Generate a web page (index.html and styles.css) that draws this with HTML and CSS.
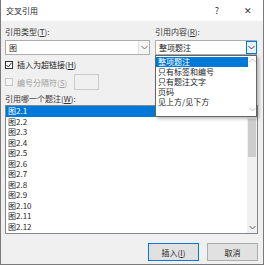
FILE: index.html
```html
<!DOCTYPE html>
<html lang="zh-CN">
<head>
    <meta charset="UTF-8">
    <title>交叉引用</title>
    <link rel="stylesheet" href="styles.css">
</head>
<body>
    <div class="dialog">
        <div class="titlebar">
            <span class="title">交叉引用</span>
            <span class="help">?</span>
            <span class="close">&#x2715;</span>
        </div>
        <div class="content">
            <div class="top">
                <div class="col left">
                    <div class="label">引用类型(<u>T</u>):</div>
                    <div class="select">
                        <span class="value">图</span>
                        <span class="arrow"><svg width="7" height="5" viewBox="0 0 7 5"><path d="M0.5 1 L3.5 4 L6.5 1" fill="none" stroke="#707070" stroke-width="1"/></svg></span>
                    </div>
                </div>
                <div class="col right">
                    <div class="label">引用内容(<u>R</u>):</div>
                    <div class="select open">
                        <span class="value">整项题注</span>
                        <span class="arrow"><svg width="7" height="5" viewBox="0 0 7 5"><path d="M0.5 1 L3.5 4 L6.5 1" fill="none" stroke="#404040" stroke-width="1"/></svg></span>
                    </div>
                    <div class="dropdown">
                        <ul class="options">
                            <li class="sel">整项题注</li>
                            <li>只有标签和编号</li>
                            <li>只有题注文字</li>
                            <li>页码</li>
                            <li>见上方/见下方</li>
                        </ul>
                        <div class="dd-scroll">
                            <svg width="7" height="5" viewBox="0 0 7 5"><path d="M0.5 4 L3.5 1 L6.5 4" fill="none" stroke="#c0c0c0" stroke-width="1"/></svg>
                            <svg width="7" height="5" viewBox="0 0 7 5"><path d="M0.5 1 L3.5 4 L6.5 1" fill="none" stroke="#c0c0c0" stroke-width="1"/></svg>
                        </div>
                    </div>
                </div>
            </div>

            <div class="check-row">
                <span class="checkbox checked"><svg width="6" height="6" viewBox="0 0 6 6"><path d="M0.5 3 L2.3 5 L5.5 0.8" fill="none" stroke="#333" stroke-width="1"/></svg></span>
                <span>插入为超链接(<u>H</u>)</span>
            </div>
            <div class="check-row disabled">
                <span class="checkbox"></span>
                <span>编号分隔符(<u>S</u>)</span>
                <span class="sep-box"></span>
            </div>

            <div class="label list-label">引用哪一个题注(<u>W</u>):</div>
            <div class="listbox">
                <ul class="items">
                    <li class="sel">图2.1</li>
                    <li>图2.2</li>
                    <li>图2.3</li>
                    <li>图2.4</li>
                    <li>图2.5</li>
                    <li>图2.6</li>
                    <li>图2.7</li>
                    <li>图2.8</li>
                    <li>图2.9</li>
                    <li>图2.10</li>
                    <li>图2.11</li>
                    <li>图2.12</li>
                </ul>
                <div class="scrollbar">
                    <span class="sb-btn"><svg width="7" height="5" viewBox="0 0 7 5"><path d="M0.5 4 L3.5 1 L6.5 4" fill="none" stroke="#606060" stroke-width="1"/></svg></span>
                    <span class="thumb"></span>
                    <span class="track"></span>
                    <span class="sb-btn"><svg width="7" height="5" viewBox="0 0 7 5"><path d="M0.5 1 L3.5 4 L6.5 1" fill="none" stroke="#606060" stroke-width="1"/></svg></span>
                </div>
            </div>

            <div class="buttons">
                <button class="btn default">插入(<u>I</u>)</button>
                <button class="btn">取消</button>
            </div>
        </div>
    </div>
</body>
</html>
```

FILE: styles.css
```css
body { margin: 0; font-family: "Noto Sans CJK SC", "Noto Sans", sans-serif; font-size: 8px; color: #1e1e1e; }
ul { list-style: none; margin: 0; padding: 0; }
u { text-decoration: underline; text-underline-offset: 1px; }

.dialog { width: 264px; height: 265px; box-sizing: border-box; border: 1px solid #7a7a7a; border-top: none; background: #f0f0f0; display: flex; flex-direction: column; }
.titlebar { height: 21px; background: #fff; display: flex; align-items: center; padding: 0 0 0 5px; }
.title { flex: 1; font-size: 8px; color: #222; }
.help { width: 32px; text-align: center; font-size: 9px; color: #333; }
.close { width: 30px; text-align: center; font-size: 9px; color: #333; }

.content { padding: 0 5px 0 4px; display: flex; flex-direction: column; }
.top { display: flex; gap: 5px; margin-top: 4px; }
.col { position: relative; }
.col.left { width: 145px; }
.col.right { width: 102px; }
.label { height: 13px; line-height: 13px; color: #333; }
.top .label { margin-bottom: 2px; }

.select { height: 15px; box-sizing: border-box; background: #fff; border: 1px solid #adadad; display: flex; align-items: center; }
.select .value { flex: 1; padding-left: 3px; line-height: 13px; }
.select .arrow { width: 10px; height: 13px; display: flex; align-items: center; justify-content: center; border-left: 1px solid #e3e3e3; background: #f5f5f5; }
.select.open .arrow { border: 1px solid #0078d7; background: #e5f1fb; height: 13px; box-sizing: border-box; margin-right: -1px; width: 11px; }

.dropdown { position: absolute; left: 0; top: 30px; width: 102px; height: 62px; box-sizing: border-box; background: #fff; border: 1px solid #646464; box-shadow: 2px 2px 3px rgba(0,0,0,0.25); display: flex; }
.options { flex: 1; padding-top: 1px; }
.options li { height: 10px; line-height: 10px; padding-left: 2px; color: #1e1e1e; }
.options li.sel { background: #0078d7; color: #fff; }
.dd-scroll { width: 8px; display: flex; flex-direction: column; justify-content: space-between; align-items: center; padding: 2px 0 4px; }

.check-row { display: flex; align-items: center; gap: 4px; height: 13px; margin-top: 3px; }
.check-row.disabled { color: #a0a0a0; height: 16px; margin-top: 3px; }
.checkbox { width: 6px; height: 6px; border: 1px solid #333; background: #fff; display: flex; }
.checkbox svg { display: block; }
.disabled .checkbox { border-color: #c8c8c8; background: #f4f4f4; }
.sep-box { width: 25px; height: 16px; box-sizing: border-box; border: 1px solid #cccccc; background: #f0f0f0; margin-left: 3px; }

.list-label { margin-top: 2px; }
.listbox { height: 129px; box-sizing: border-box; border: 1px solid #828790; background: #fff; display: flex; }
.items { flex: 1; }
.items li { height: 10.56px; line-height: 10.56px; padding-left: 2px; }
.items li.sel { background: #0078d7; color: #fff; }
.scrollbar { width: 10px; background: #f0f0f0; display: flex; flex-direction: column; }
.sb-btn { height: 11px; display: flex; align-items: center; justify-content: center; }
.thumb { height: 38px; margin: 2px 1px 0; background: #cdcdcd; }
.track { flex: 1; }

.buttons { display: flex; justify-content: flex-end; gap: 8px; margin-top: 9px; }
.btn { width: 51px; height: 18px; box-sizing: border-box; border: 1px solid #adadad; background: #e1e1e1; font-family: inherit; font-size: 8px; color: #1e1e1e; padding: 0; }
.btn.default { border: 1px solid #0078d7; }
```
